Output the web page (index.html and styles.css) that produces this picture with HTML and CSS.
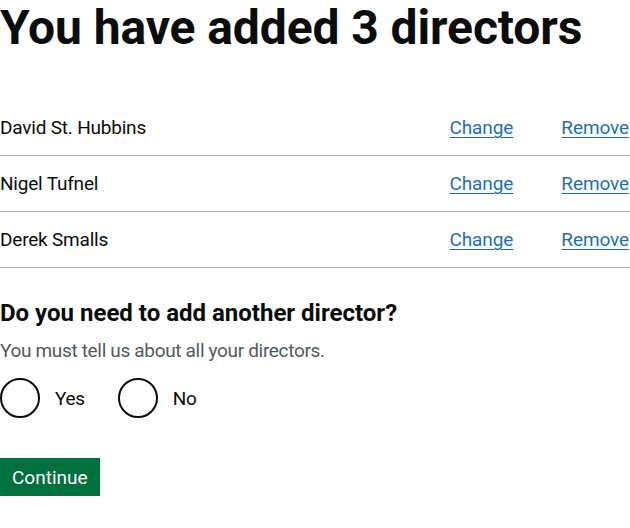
FILE: index.html
```html
<!DOCTYPE html>
<html lang="en">
<head>
<meta charset="utf-8">
<title>You have added 3 directors</title>
<link rel="stylesheet" href="styles.css">
</head>
<body>
<main class="page">
  <h1 class="heading-xl">You have added 3 directors</h1>
  <dl class="summary-list">
    <div class="summary-row">
      <dt class="summary-key">David St. Hubbins</dt>
      <dd class="summary-actions">
        <a class="link" href="#">Change</a>
        <a class="link" href="#">Remove</a>
      </dd>
    </div>
    <div class="summary-row">
      <dt class="summary-key">Nigel Tufnel</dt>
      <dd class="summary-actions">
        <a class="link" href="#">Change</a>
        <a class="link" href="#">Remove</a>
      </dd>
    </div>
    <div class="summary-row">
      <dt class="summary-key">Derek Smalls</dt>
      <dd class="summary-actions">
        <a class="link" href="#">Change</a>
        <a class="link" href="#">Remove</a>
      </dd>
    </div>
  </dl>
  <form class="form">
    <fieldset class="fieldset">
      <legend class="legend-m">Do you need to add another director?</legend>
      <div class="hint">You must tell us about all your directors.</div>
      <div class="radios">
        <label class="radio">
          <input class="radio-input" type="radio" name="add">
          <span class="radio-circle"></span>
          <span class="radio-label">Yes</span>
        </label>
        <label class="radio">
          <input class="radio-input" type="radio" name="add">
          <span class="radio-circle"></span>
          <span class="radio-label">No</span>
        </label>
      </div>
    </fieldset>
    <button class="button" type="button">Continue</button>
  </form>
</main>
</body>
</html>
```
FILE: styles.css
```css
* { box-sizing: border-box; }
html, body { margin: 0; padding: 0; background: #fff; }
body {
  font-family: Roboto, "Liberation Sans", sans-serif;
  color: #0b0c0c;
  -webkit-font-smoothing: antialiased;
}
.page { width: 630px; }
.heading-xl {
  margin: 0 0 44px;
  font-size: 48px;
  line-height: 56px;
  font-weight: 700;
  letter-spacing: -0.1px;
}
.summary-list { margin: 0 0 30px; padding: 0; }
.summary-row {
  display: flex;
  align-items: center;
  height: 56px;
  border-bottom: 1px solid #b1b4b6;
  font-size: 19px;
  line-height: 25px;
}
.summary-key { flex: 1; margin: 0; font-weight: 400; letter-spacing: -0.2px; }
.summary-actions {
  margin: 0 1px 0 0;
  display: flex;
  gap: 48px;
}
.link {
  color: #1d70b8;
  text-decoration: underline;
  text-underline-offset: 3px;
  text-decoration-thickness: 1px;
  letter-spacing: -0.1px;
}
.form { margin: 0; }
.fieldset { margin: 0 0 30px; padding: 0; border: 0; min-width: 0; }
.legend-m {
  padding: 0;
  margin: 0 0 10px;
  font-size: 24px;
  line-height: 30px;
  font-weight: 700;
}
.hint {
  font-size: 19px;
  line-height: 25px;
  color: #505a5f;
  margin-bottom: 15px;
  letter-spacing: -0.33px;
}
.radios { display: flex; gap: 18px; }
.radio {
  display: flex;
  align-items: center;
  height: 40px;
  margin-bottom: 10px;
  font-size: 19px;
  line-height: 25px;
}
.radio-input { position: absolute; opacity: 0; width: 0; height: 0; margin: 0; }
.radio-circle {
  width: 40px;
  height: 40px;
  border: 2px solid #0b0c0c;
  border-radius: 50%;
}
.radio-label { padding: 0 15px; letter-spacing: -0.3px; }
.button {
  display: inline-block;
  margin: 0;
  padding: 8px 10px 7px;
  border: 2px solid transparent;
  border-radius: 0;
  background: #00703c;
  color: #fff;
  box-shadow: 0 2px 0 #002d18;
  font-family: Roboto, "Liberation Sans", sans-serif;
  font-size: 19px;
  line-height: 19px;
  font-weight: 400;
  cursor: pointer;
}
```
